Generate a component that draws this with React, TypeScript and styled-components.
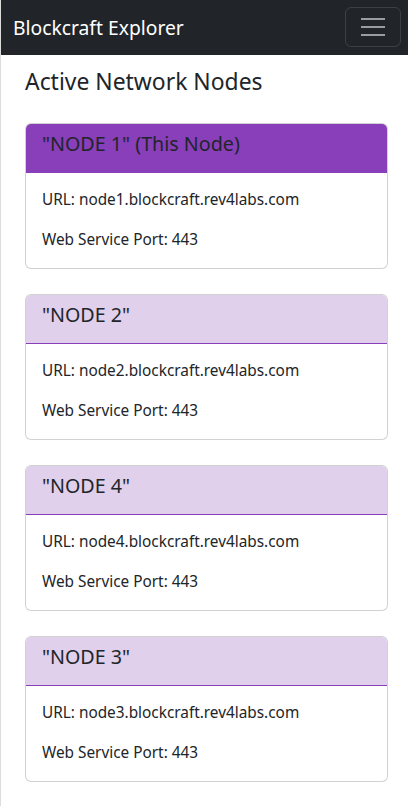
import React from "react";
import styled, { createGlobalStyle } from "styled-components";

const Global = createGlobalStyle`
  html, body { margin: 0; padding: 0; background: #ffffff; }
  body {
    font-family: "Noto Sans", "Open Sans", sans-serif;
    color: #212529;
    border-left: 1px solid #dcdcdc;
    min-height: 806px;
    box-sizing: border-box;
  }
  * { box-sizing: border-box; }
`;

const Navbar = styled.nav`
  height: 55px;
  background: #212529;
  display: flex;
  align-items: center;
  justify-content: space-between;
  padding: 0 7px 0 12px;
`;

const Brand = styled.span`
  color: #ffffff;
  font-size: 19.3px;
  line-height: 24px;
`;

const Toggler = styled.button`
  width: 56px;
  height: 40px;
  margin-top: -1px;
  background: transparent;
  border: 1px solid rgba(255, 255, 255, 0.12);
  border-radius: 6px;
  display: flex;
  flex-direction: column;
  align-items: center;
  justify-content: center;
  gap: 6px;
  padding: 0;
`;

const Bar = styled.span`
  display: block;
  width: 24px;
  height: 2px;
  background: rgba(255, 255, 255, 0.55);
`;

const Main = styled.main`
  padding: 13px 20px 24px 24px;
`;

const Title = styled.h3`
  margin: 0 0 27px 0;
  font-weight: 400;
  font-size: 22.9px;
  line-height: 28px;
`;

const CardList = styled.div`
  display: flex;
  flex-direction: column;
  gap: 25px;
`;

const Card = styled.section`
  border: 1px solid rgba(0, 0, 0, 0.175);
  border-radius: 6px;
  overflow: hidden;
  background: #fff;
`;

const CardHeader = styled.header<{ $active: boolean }>`
  background: ${(p) => (p.$active ? "#893eba" : "#e1d0ec")};
  border-bottom: 1px solid #893eba;
  padding: 8px 16px 16px;
`;

const CardTitle = styled.h5`
  margin: 0;
  font-weight: 400;
  font-size: 19.7px;
  line-height: 24px;
`;

const CardBody = styled.div`
  padding: 14px 16px 17px;
  display: flex;
  flex-direction: column;
  gap: 16px;
`;

const Line = styled.p`
  margin: 0;
  font-size: 15.35px;
  line-height: 24px;
`;

const nodes = [
  { name: '"NODE 1" (This Node)', url: "node1.blockcraft.rev4labs.com", active: true },
  { name: '"NODE 2"', url: "node2.blockcraft.rev4labs.com", active: false },
  { name: '"NODE 4"', url: "node4.blockcraft.rev4labs.com", active: false },
  { name: '"NODE 3"', url: "node3.blockcraft.rev4labs.com", active: false },
];

export default function App() {
  return (
    <>
      <Global />
      <Navbar>
        <Brand>Blockcraft Explorer</Brand>
        <Toggler aria-label="Toggle navigation">
          <Bar />
          <Bar />
          <Bar />
        </Toggler>
      </Navbar>
      <Main>
        <Title>Active Network Nodes</Title>
        <CardList>
          {nodes.map((n) => (
            <Card key={n.name}>
              <CardHeader $active={n.active}>
                <CardTitle>{n.name}</CardTitle>
              </CardHeader>
              <CardBody>
                <Line>URL: {n.url}</Line>
                <Line>Web Service Port: 443</Line>
              </CardBody>
            </Card>
          ))}
        </CardList>
      </Main>
    </>
  );
}
